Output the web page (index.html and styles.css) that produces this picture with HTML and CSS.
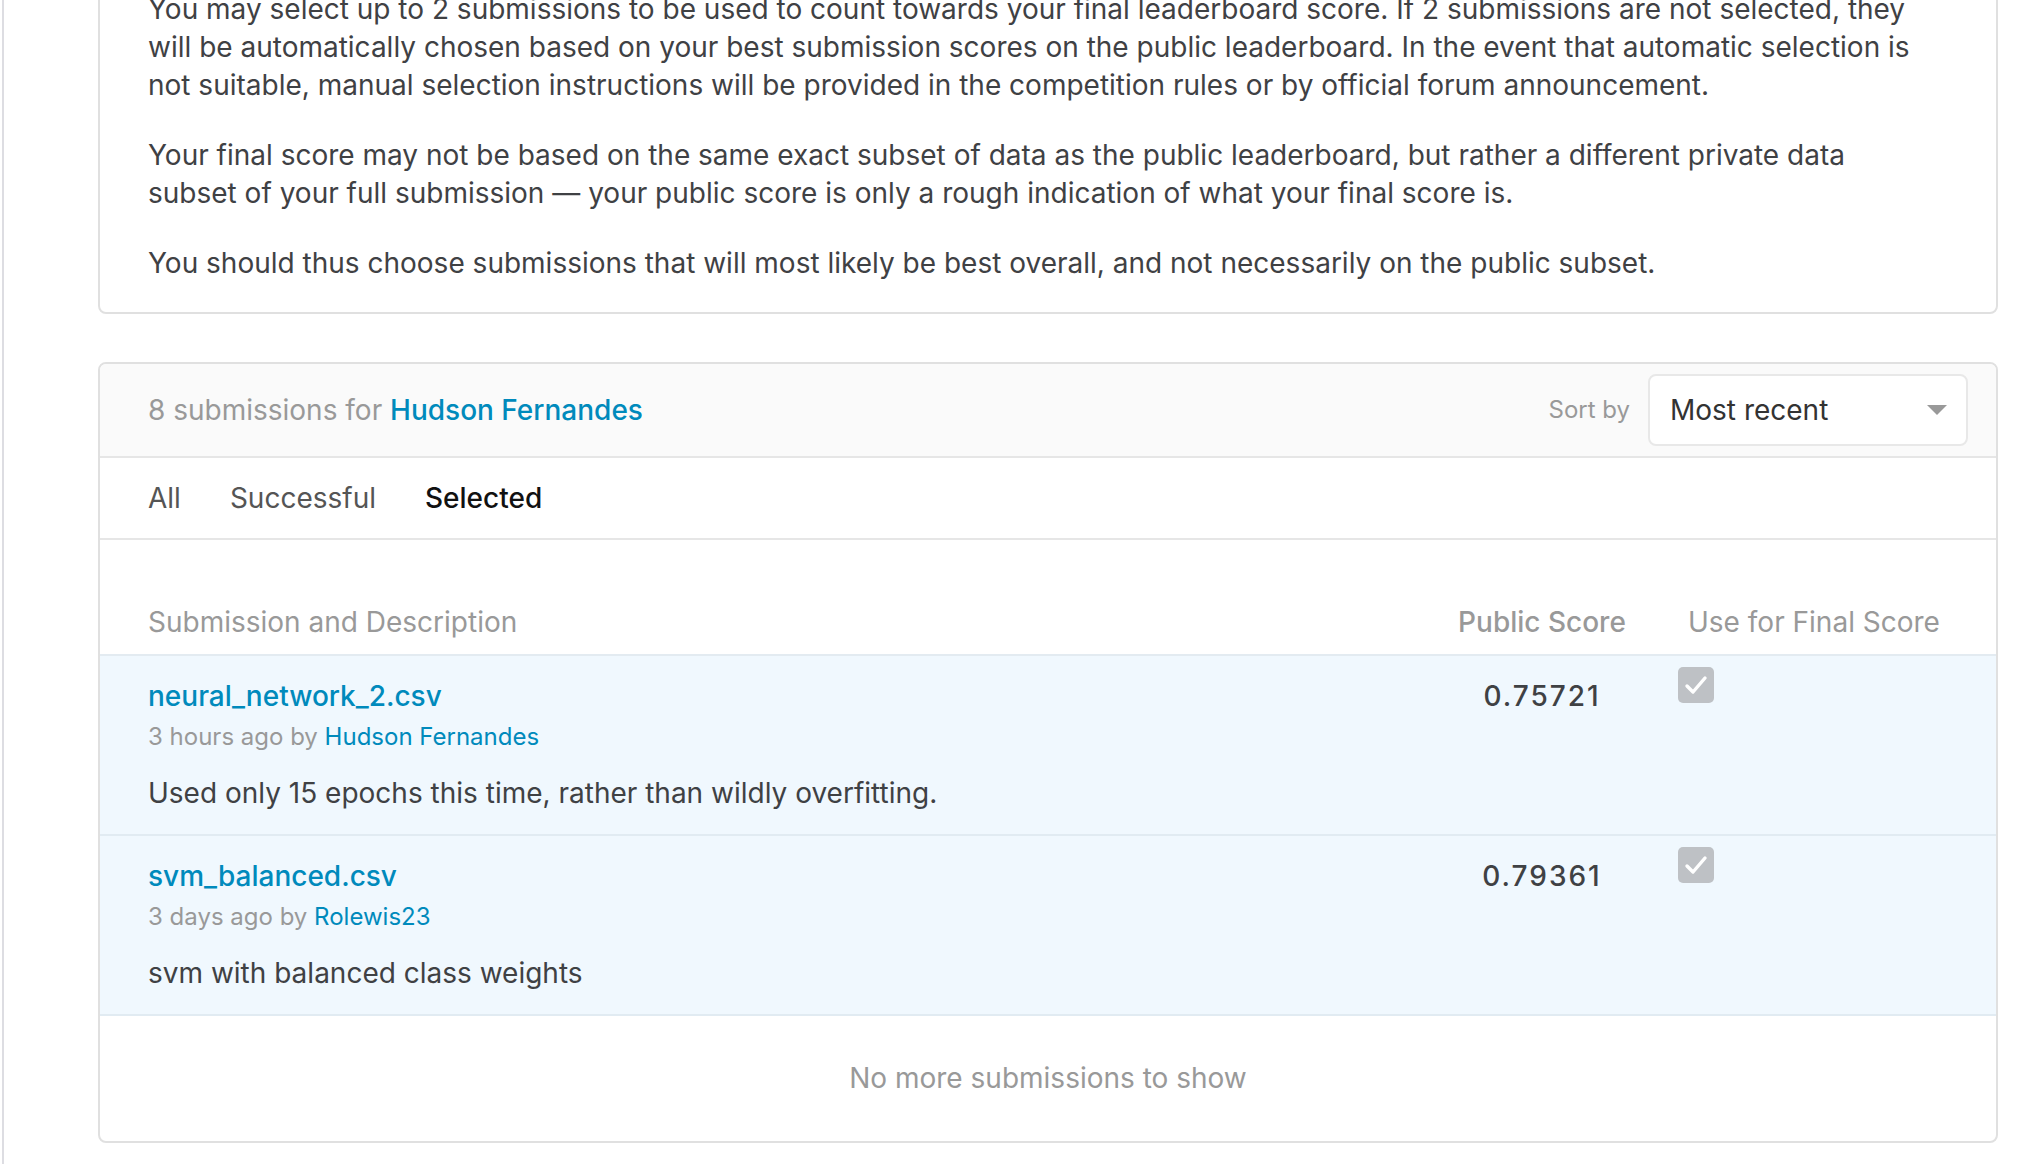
FILE: index.html
```html
<!DOCTYPE html>
<html lang="en">
<head>
<meta charset="utf-8">
<title>My Submissions</title>
<link rel="stylesheet" href="styles.css">
</head>
<body>
<div class="page">
  <section class="card info-card">
    <p>You may select up to 2 submissions to be used to count towards your final leaderboard score. If 2 submissions are not selected, they will be automatically chosen based on your best submission scores on the public leaderboard. In the event that automatic selection is not suitable, manual selection instructions will be provided in the competition rules or by official forum announcement.</p>
    <p>Your final score may not be based on the same exact subset of data as the public leaderboard, but rather a different private data subset of your full submission — your public score is only a rough indication of what your final score is.</p>
    <p>You should thus choose submissions that will most likely be best overall, and not necessarily on the public subset.</p>
  </section>

  <section class="card subs-card">
    <header class="subs-header">
      <div class="subs-title">8 submissions for <a class="link owner" href="#">Hudson Fernandes</a></div>
      <div class="sort">
        <span class="sort-label">Sort by</span>
        <div class="select">
          <span>Most recent</span>
          <svg class="caret" width="20" height="10" viewBox="0 0 20 10"><path d="M0 0 H20 L10 10 Z" fill="#999"/></svg>
        </div>
      </div>
    </header>

    <nav class="tabs">
      <a class="tab" href="#">All</a>
      <a class="tab" href="#">Successful</a>
      <a class="tab active" href="#">Selected</a>
    </nav>

    <div class="table">
      <div class="thead">
        <div class="th">Submission and Description</div>
        <div class="th th-score">Public Score</div>
        <div class="th th-final">Use for Final Score</div>
      </div>

      <div class="row">
        <div class="cell-desc">
          <a class="file link" href="#">neural_network_2.csv</a>
          <div class="meta">3 hours ago by <a class="link" href="#">Hudson Fernandes</a></div>
          <div class="desc">Used only 15 epochs this time, rather than wildly overfitting.</div>
        </div>
        <div class="score">0.75721</div>
        <div class="final">
          <span class="checkbox"><svg width="36" height="36" viewBox="0 0 36 36"><path d="M9 19 L15 25 L27 11" fill="none" stroke="#fff" stroke-width="3.4" stroke-linecap="round" stroke-linejoin="round"/></svg></span>
        </div>
      </div>

      <div class="row">
        <div class="cell-desc">
          <a class="file link" href="#">svm_balanced.csv</a>
          <div class="meta">3 days ago by <a class="link" href="#">Rolewis23</a></div>
          <div class="desc">svm with balanced class weights</div>
        </div>
        <div class="score">0.79361</div>
        <div class="final">
          <span class="checkbox"><svg width="36" height="36" viewBox="0 0 36 36"><path d="M9 19 L15 25 L27 11" fill="none" stroke="#fff" stroke-width="3.4" stroke-linecap="round" stroke-linejoin="round"/></svg></span>
        </div>
      </div>

      <div class="footer">No more submissions to show</div>
    </div>
  </section>
</div>
</body>
</html>
```

FILE: styles.css
```css
* { box-sizing: border-box; }

html, body {
  margin: 0;
  padding: 0;
  background: #fff;
}

body {
  font-family: Inter, "Noto Sans", "Liberation Sans", sans-serif;
  font-size: 28px;
  line-height: 38px;
  color: #3f4144;
  overflow: hidden;
  height: 1164px;
}

.page {
  display: flow-root;
  margin-left: 2px;
  border-left: 2px solid #dddde2;
  padding: 0 20px 0 94px;
  min-height: 1164px;
}

.link {
  color: #008abc;
  text-decoration: none;
}

.card {
  border: 2px solid #e0e0e0;
  border-radius: 8px;
  background: #fff;
}

.info-card {
  margin-top: -42px;
  padding: 30px 64px 30px 48px;
}

.info-card p {
  margin: 0 0 32px;
}

.info-card p:last-child {
  margin-bottom: 0;
}

.subs-card {
  margin-top: 48px;
  overflow: hidden;
}

.subs-header {
  display: flex;
  align-items: center;
  justify-content: space-between;
  background: #fafafa;
  border-bottom: 2px solid #e6e6e6;
  padding: 10px 28px 10px 48px;
}

.subs-title {
  color: #999;
}

.owner {
  font-weight: 500;
}

.sort {
  display: flex;
  align-items: center;
  gap: 18px;
}

.sort-label {
  font-size: 24px;
  color: #999;
}

.select {
  width: 320px;
  height: 72px;
  border: 2px solid #e8e8e8;
  border-radius: 8px;
  background: #fff;
  display: flex;
  align-items: center;
  justify-content: space-between;
  padding: 0 19px 0 20px;
  color: #333;
}

.caret {
  display: block;
}

.tabs {
  display: flex;
  gap: 49px;
  padding: 21px 48px;
  border-bottom: 2px solid #e6e6e6;
}

.tab {
  color: #555;
  text-decoration: none;
}

.tab.active {
  color: #111;
  font-weight: 500;
}

.thead,
.row {
  display: grid;
  grid-template-columns: 1fr 236px 270px;
  column-gap: 18px;
  padding: 0 48px;
}

.thead {
  padding-top: 63px;
  padding-bottom: 13px;
  border-bottom: 2px solid #e3ebf1;
}

.th {
  color: #999;
}

.th-score {
  text-align: center;
  font-weight: 500;
}

.th-final {
  padding-left: 10px;
}

.row {
  background: #f0f8fe;
  border-bottom: 2px solid #e1ebf2;
  padding-top: 21px;
  padding-bottom: 22px;
}

.cell-desc {
  display: flex;
  flex-direction: column;
  align-items: flex-start;
}

.file {
  font-weight: 500;
}

.meta {
  font-size: 24px;
  line-height: 32px;
  color: #999;
  margin-top: 6px;
}

.desc {
  margin-top: 21px;
}

.score {
  text-align: center;
  font-weight: 500;
  color: #3f4144;
  letter-spacing: 2px;
}

.checkbox {
  display: block;
  width: 36px;
  height: 36px;
  margin-top: -10px;
  background: #bec1c5;
  border-radius: 5px;
}

.checkbox svg {
  display: block;
}

.footer {
  text-align: center;
  color: #999;
  padding: 43px 0 44px;
}
```
